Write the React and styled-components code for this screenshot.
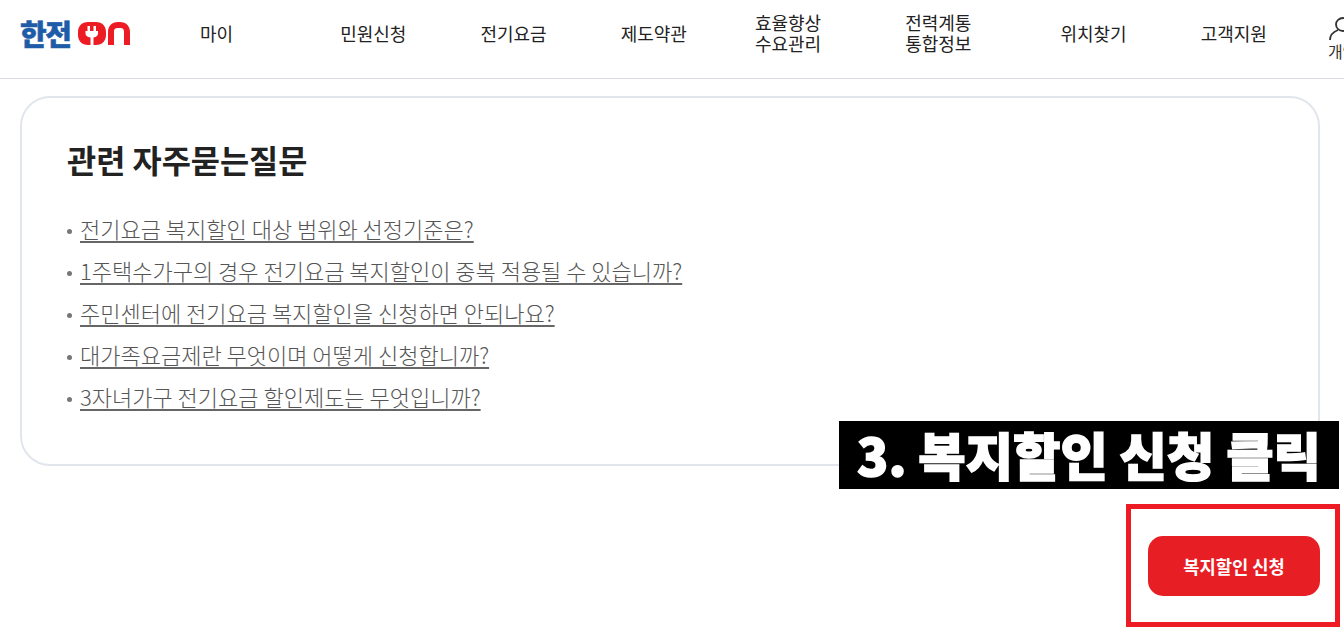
import React from 'react'
import styled, { createGlobalStyle } from 'styled-components'

const KR = `"Noto Sans CJK KR", "Noto Sans", sans-serif`

const GlobalStyle = createGlobalStyle`
  html, body {
    margin: 0;
    padding: 0;
    background: #fff;
    overflow: hidden;
    font-family: ${KR};
  }
`

const menu = [
  { label: ['마이'], gap: 70 },
  { label: ['민원신청'], gap: 107 },
  { label: ['전기요금'], gap: 74 },
  { label: ['제도약관'], gap: 74 },
  { label: ['효율향상', '수요관리'], gap: 68 },
  { label: ['전력계통', '통합정보'], gap: 84 },
  { label: ['위치찾기'], gap: 89 },
  { label: ['고객지원'], gap: 74 },
]

const faqs = [
  '전기요금 복지할인 대상 범위와 선정기준은?',
  '1주택수가구의 경우 전기요금 복지할인이 중복 적용될 수 있습니까?',
  '주민센터에 전기요금 복지할인을 신청하면 안되나요?',
  '대가족요금제란 무엇이며 어떻게 신청합니까?',
  '3자녀가구 전기요금 할인제도는 무엇입니까?',
]

const OnMark = () => (
  <svg width="52" height="23" viewBox="0 0 52 23" aria-hidden="true">
    <path
      fill="#ed1c24"
      fillRule="evenodd"
      d="M10 0h8c6 0 10 4 10 10v3c0 6-4 10-10 10h-2.500v-7.500c3-.5 4.500-2 4.500-4V9h-2V4h-2.500v5h-3.500V4H9.500v5h-2v2.500c0 2 1.500 3.500 5 4V23H10C4 23 0 19 0 13v-3C0 4 4 0 10 0Z"
    />
    <path
      fill="#ed1c24"
      d="M30 23V10C30 4 34 0 40 0h2c6 0 10 4 10 10v13h-6V10c0-3-1-4-4-4h-2c-3 0-4 1-4 4v13Z"
    />
  </svg>
)

const UserIcon = () => (
  <svg width="28" height="24" viewBox="0 0 28 24" aria-hidden="true">
    <ellipse cx="14" cy="7.500" rx="7" ry="6.500" fill="none" stroke="#333" strokeWidth="1.800" />
    <path d="M1 23c0-5 3-8 8-10M27 23c0-5-3-8-8-10" fill="none" stroke="#333" strokeWidth="1.800" />
  </svg>
)

export default function App() {
  return (
    <>
      <GlobalStyle />
      <Page>
        <Header>
          <Logo>
            <LogoText>한전</LogoText>
            <OnMark />
          </Logo>
          <Nav>
            {menu.map((item) => (
              <NavItem key={item.label[0]} $gap={item.gap}>
                {item.label.map((line) => (
                  <span key={line}>{line}</span>
                ))}
              </NavItem>
            ))}
          </Nav>
          <Login>
            <UserIcon />
            <span>개인</span>
          </Login>
        </Header>
        <Main>
          <Card>
            <CardTitle>관련 자주묻는질문</CardTitle>
            <FaqList>
              {faqs.map((faq) => (
                <FaqItem key={faq}>
                  <FaqLink href="#">{faq}</FaqLink>
                </FaqItem>
              ))}
            </FaqList>
          </Card>
          <Actions>
            <ApplyButton>복지할인 신청</ApplyButton>
          </Actions>
        </Main>
        <Caption>3. 복지할인 신청 클릭</Caption>
        <Highlight />
      </Page>
    </>
  )
}

const Page = styled.div`
  position: relative;
  width: 1344px;
  height: 636px;
  overflow: hidden;
  background: #fff;
`

const Header = styled.header`
  display: flex;
  align-items: center;
  height: 66px;
  padding: 0 0 12px 20px;
  border-bottom: 1px solid #dcdce4;
  box-sizing: content-box;
`

const Logo = styled.div`
  display: flex;
  align-items: center;
  gap: 6px;
  width: 110px;
  flex: none;
`

const LogoText = styled.span`
  width: 52px;
  font-size: 29px;
  line-height: 26px;
  font-weight: 900;
  letter-spacing: -1.500px;
  color: #1f5ca8;
  white-space: nowrap;
  -webkit-text-stroke: 0.5px #1f5ca8;
`

const Nav = styled.nav`
  display: flex;
  align-items: center;
  flex: none;
`

const NavItem = styled.a`
  display: flex;
  flex-direction: column;
  align-items: center;
  margin-left: ${(p) => p.$gap}px;
  font-size: 18px;
  line-height: 21px;
  color: #222;
  white-space: nowrap;
`

const Login = styled.div`
  display: flex;
  flex-direction: column;
  align-items: center;
  flex: none;
  margin-left: 61px;
  padding-top: 12px;
  font-size: 16px;
  line-height: 20px;
  color: #333;
  white-space: nowrap;
`

const Main = styled.main`
  padding: 17px 24px 0 20px;
`

const Card = styled.section`
  box-sizing: border-box;
  height: 370px;
  padding: 39px 45px 0;
  border: 2px solid #e1e5ec;
  border-radius: 30px;
`

const CardTitle = styled.h2`
  margin: 0;
  font-size: 31.700px;
  line-height: 44px;
  font-weight: 700;
  color: #222;
`

const FaqList = styled.ul`
  margin: 26px 0 0;
  padding: 0;
  list-style: none;
`

const FaqItem = styled.li`
  height: 42px;
  line-height: 42px;
  font-size: 22px;
  font-weight: 300;
  color: #666;
  &::before {
    content: '';
    display: inline-block;
    width: 5px;
    height: 5px;
    margin-right: 8px;
    border-radius: 50%;
    background: #777;
    vertical-align: 4px;
  }
`

const FaqLink = styled.a`
  color: #555;
  text-decoration: underline;
  text-decoration-thickness: 2px;
  text-decoration-color: #666;
  text-underline-offset: 3px;
`

const Actions = styled.div`
  display: flex;
  justify-content: flex-end;
  margin-top: 70px;
`

const ApplyButton = styled.button`
  width: 172px;
  height: 60px;
  border: 0;
  border-radius: 15px;
  background: #e81e25;
  color: #fff;
  font-family: ${KR};
  font-size: 17.700px;
  font-weight: 700;
`

const Caption = styled.div`
  position: absolute;
  left: 839px;
  top: 421px;
  width: 500px;
  height: 68px;
  background: #000;
  color: #fff;
  font-size: 51.500px;
  line-height: 66px;
  font-weight: 900;
  -webkit-text-stroke: 1.500px #fff;
  text-align: center;
  white-space: nowrap;
`

const Highlight = styled.div`
  position: absolute;
  left: 1126px;
  top: 504px;
  width: 214px;
  height: 123px;
  box-sizing: border-box;
  border: 5px solid #ed1c24;
`
